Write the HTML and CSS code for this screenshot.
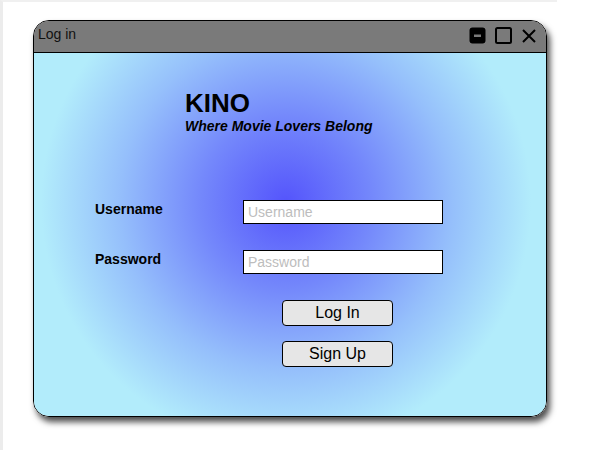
FILE: index.html
```html
<!DOCTYPE html>
<html>
<head>
<meta charset="utf-8">
<link rel="stylesheet" href="styles.css">
</head>
<body>
<div class="frame">
  <div class="window">
    <div class="titlebar">
      <span class="title">Log in</span>
      <div class="controls">
        <svg class="ic" width="17" height="17" viewBox="0 0 17 17"><rect x="0.5" y="0.5" width="16" height="16" rx="3" fill="#000"/><rect x="5" y="7.5" width="7" height="2.5" fill="#7a7a7a"/></svg>
        <svg class="ic" width="17" height="17" viewBox="0 0 17 17"><rect x="1" y="1" width="15" height="15" rx="1.5" fill="none" stroke="#000" stroke-width="2"/></svg>
        <svg class="ic" width="16" height="16" viewBox="0 0 16 16"><path d="M2 2 L14 14 M14 2 L2 14" stroke="#000" stroke-width="2" fill="none"/></svg>
      </div>
    </div>
    <div class="content">
      <div class="brand">
        <div class="logo">KINO</div>
        <div class="tagline">Where Movie Lovers Belong</div>
      </div>
      <div class="form">
        <label class="lbl">Username</label>
        <input class="field" type="text" placeholder="Username">
        <label class="lbl">Password</label>
        <input class="field" type="password" placeholder="Password">
      </div>
      <div class="buttons">
        <button class="btn">Log In</button>
        <button class="btn">Sign Up</button>
      </div>
    </div>
  </div>
</div>
</body>
</html>
```
FILE: styles.css
```css
html, body {
  margin: 0;
  padding: 0;
  background: #fff;
}
body {
  font-family: "Liberation Sans", Arial, sans-serif;
  width: 590px;
  height: 457px;
  overflow: hidden;
}
.frame {
  width: 557px;
  height: 450px;
  background: #fff;
  border-left: 3px solid #ececec;
  border-top: 2px solid #f0f0f0;
  padding: 18px 0 0 30px;
  box-sizing: border-box;
}
.window {
  width: 514px;
  height: 397px;
  border: 1px solid #000;
  border-radius: 16px;
  box-sizing: border-box;
  overflow: hidden;
  display: flex;
  flex-direction: column;
  box-shadow: 3px 5px 6px rgba(0,0,0,0.7);
}
.titlebar {
  height: 32px;
  flex: none;
  background: #7a7a7a;
  border-bottom: 1px solid #000;
  box-sizing: border-box;
  display: flex;
  align-items: flex-start;
  justify-content: space-between;
}
.title {
  font-size: 14px;
  line-height: 16px;
  color: #111;
  padding: 5px 0 0 4px;
}
.controls {
  display: flex;
  align-items: center;
  gap: 9px;
  padding: 6px 9px 0 0;
}
.ic {
  display: block;
}
.content {
  flex: 1;
  background: radial-gradient(ellipse 245px 245px at 252px 150px, #5454fc 0%, #7488fb 35%, #95bffb 68%, #b2ecfb 100%);
  padding: 36px 0 0 0;
}
.brand {
  padding-left: 151px;
}
.logo {
  font-weight: bold;
  font-size: 26px;
  line-height: 28px;
  color: #000;
}
.tagline {
  font-weight: bold;
  font-style: italic;
  font-size: 14px;
  line-height: 16px;
  color: #000;
  margin-top: 1px;
}
.form {
  display: grid;
  grid-template-columns: 148px 200px;
  row-gap: 26px;
  padding: 66px 0 0 61px;
  align-items: start;
}
.lbl {
  font-weight: bold;
  font-size: 14px;
  line-height: 16px;
  color: #000;
  margin-top: 1px;
}
.field {
  width: 200px;
  height: 24px;
  box-sizing: border-box;
  border: 1px solid #000;
  background: #fff;
  font-family: "Liberation Sans", Arial, sans-serif;
  font-size: 14px;
  padding: 0 4px;
  margin: 0;
  outline: none;
}
.field::placeholder {
  color: #bdbdbd;
}
.buttons {
  display: flex;
  flex-direction: column;
  gap: 15px;
  padding: 26px 0 0 248px;
}
.btn {
  width: 111px;
  height: 26px;
  box-sizing: border-box;
  background: #e6e6e6;
  border: 1px solid #000;
  border-radius: 4px;
  font-family: "Liberation Sans", Arial, sans-serif;
  font-size: 16px;
  color: #000;
  padding: 0;
  margin: 0;
}
```
